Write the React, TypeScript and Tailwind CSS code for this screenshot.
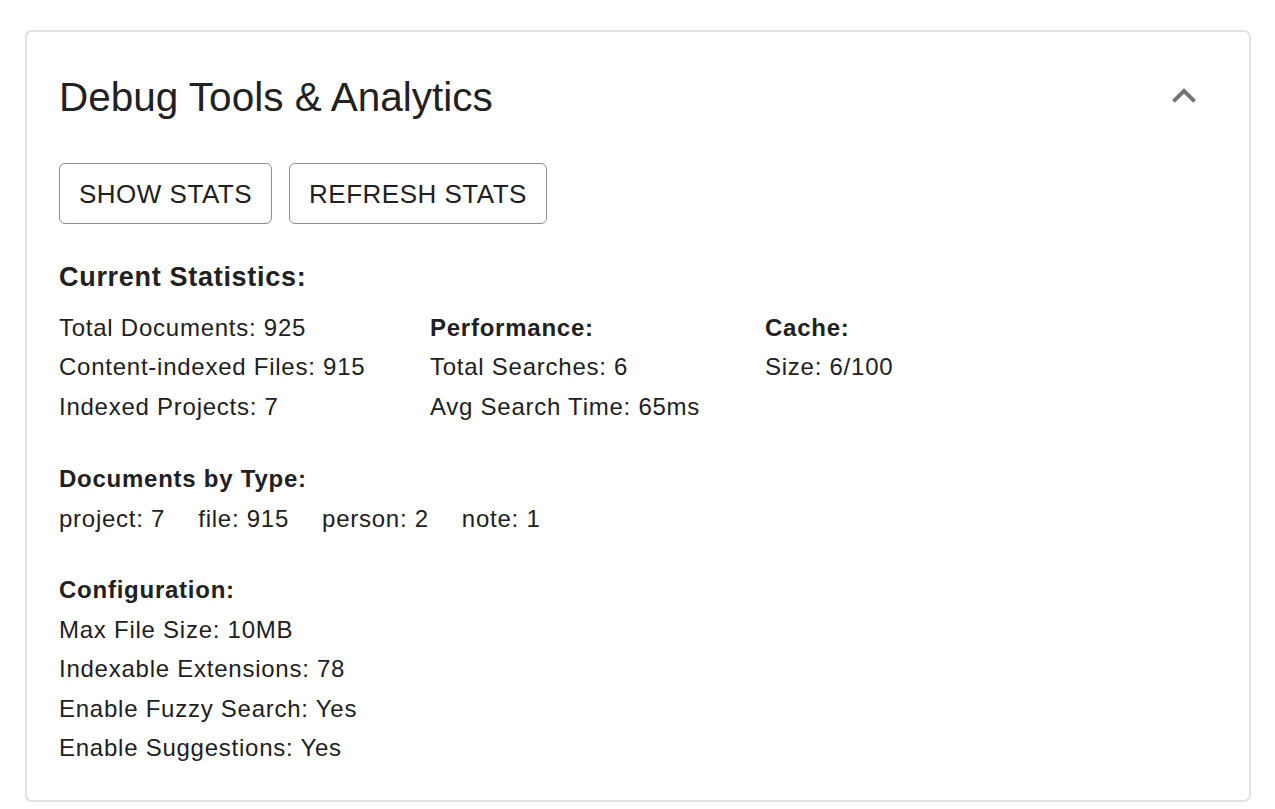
import React from "react";

const rowCls = "leading-[39.5px] h-[39.5px] whitespace-nowrap";

export default function App() {
  return (
    <div className="min-h-[809px] bg-white pt-[30px] pl-[25px] pr-[24px] pb-[8px] font-['Liberation_Sans',Arial,sans-serif] text-[#212121]">
      <div className="rounded-[7px] border-2 border-[#e2e2e2] bg-white pl-[32px] pr-[41px] pt-[41px] pb-[32px]">
        <div className="flex items-start justify-between">
          <h2 className="text-[40.5px] leading-[48px] font-normal">Debug Tools &amp; Analytics</h2>
          <svg viewBox="0 0 24 24" className="mt-[-1px] h-[48px] w-[48px] fill-[#757575]">
            <path d="M12 8l-6 6 1.41 1.41L12 10.83l4.59 4.58L18 14z" />
          </svg>
        </div>

        <div className="mt-[42px] flex gap-[17px]">
          <button className="h-[61px] rounded-[6px] border border-[#8f8f8f] px-[19px] text-[26px] leading-none uppercase tracking-[0.5px] text-[#212121]">
            Show Stats
          </button>
          <button className="h-[61px] rounded-[6px] border border-[#8f8f8f] px-[19px] text-[26px] leading-none uppercase tracking-[0.5px] text-[#212121]">
            Refresh Stats
          </button>
        </div>

        <div className="mt-[33px] text-[27px] leading-[40.5px] font-bold tracking-[0.7px]">Current Statistics:</div>

        <div className="mt-[10px] grid grid-cols-[371px_335px_1fr] text-[24px] tracking-[0.75px]">
          <div>
            <div className={rowCls}>Total Documents: 925</div>
            <div className={rowCls}>Content-indexed Files: 915</div>
            <div className={rowCls}>Indexed Projects: 7</div>
          </div>
          <div>
            <div className={rowCls + " font-bold"}>Performance:</div>
            <div className={rowCls}>Total Searches: 6</div>
            <div className={rowCls}>Avg Search Time: 65ms</div>
          </div>
          <div>
            <div className={rowCls + " font-bold"}>Cache:</div>
            <div className={rowCls}>Size: 6/100</div>
          </div>
        </div>

        <div className="mt-[32.5px] text-[24px] tracking-[0.75px]">
          <div className={rowCls + " font-bold"}>Documents by Type:</div>
          <div className={rowCls + " mt-[0.5px] flex gap-[33px]"}>
            <span>project: 7</span>
            <span>file: 915</span>
            <span>person: 2</span>
            <span>note: 1</span>
          </div>
        </div>

        <div className="mt-[32px] text-[24px] tracking-[0.75px]">
          <div className={rowCls + " font-bold"}>Configuration:</div>
          <div className={rowCls}>Max File Size: 10MB</div>
          <div className={rowCls}>Indexable Extensions: 78</div>
          <div className={rowCls}>Enable Fuzzy Search: Yes</div>
          <div className={rowCls}>Enable Suggestions: Yes</div>
        </div>
      </div>
    </div>
  );
}
